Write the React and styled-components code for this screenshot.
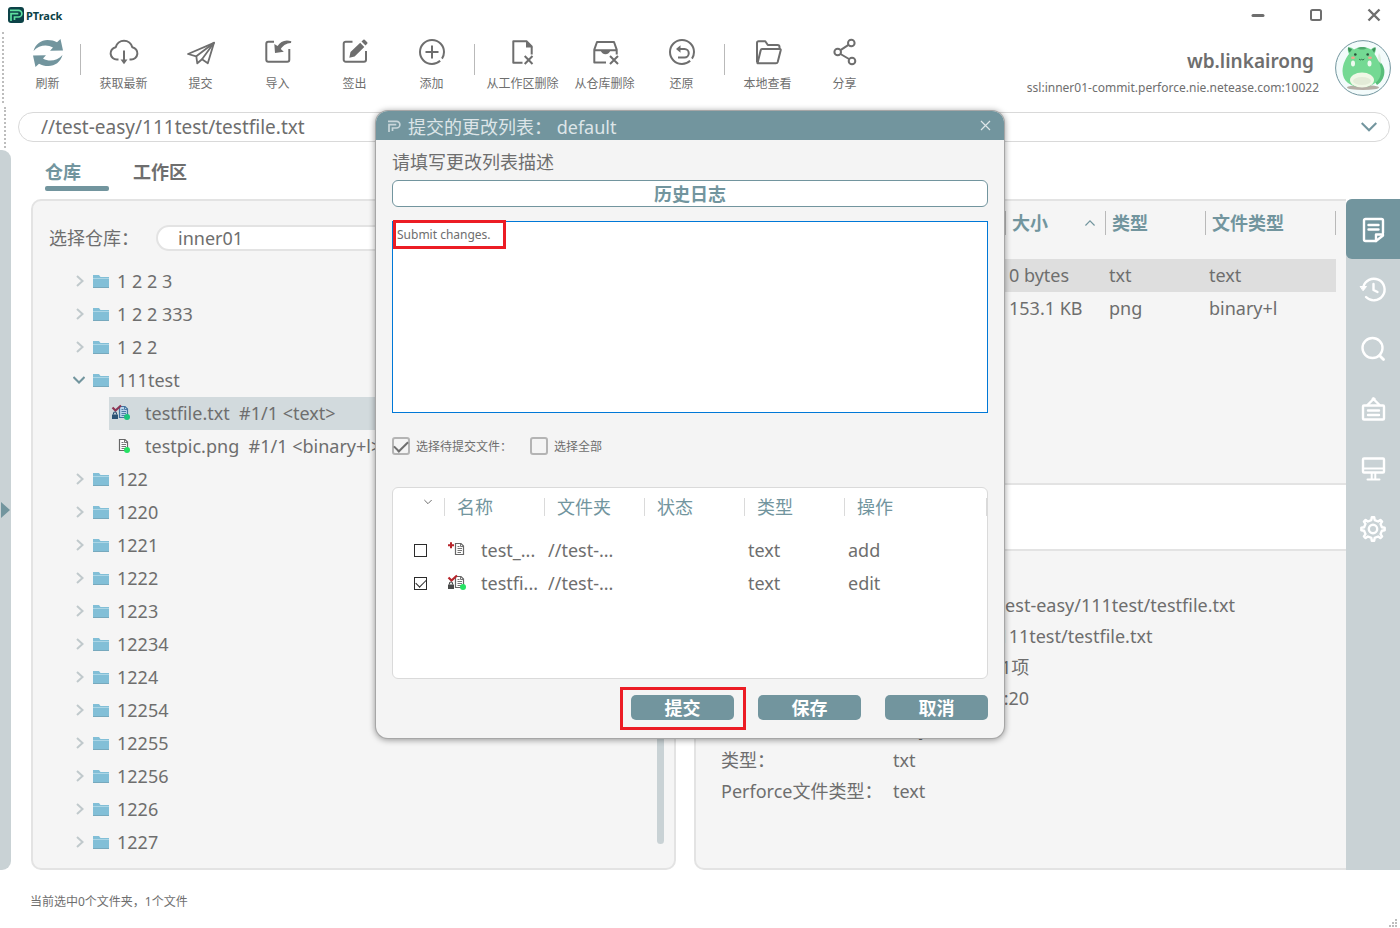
import React from 'react'
import styled, { createGlobalStyle, css } from 'styled-components'

const GlobalStyle = createGlobalStyle`
  * {
    box-sizing: border-box;
  }
  body {
    margin: 0;
    background: #fff;
    color: #6e6e6e;
    font-family: "Noto Sans", "Noto Sans CJK SC", sans-serif;
    font-size: 18px;
  }
  button, input, textarea, select {
    font: inherit;
    color: inherit;
  }
  button {
    padding: 0;
    border: none;
    background: none;
    cursor: pointer;
  }
  ul, dl, dd {
    margin: 0;
    padding: 0;
    list-style: none;
  }
  svg {
    display: block;
    flex: none;
  }
`

const Page = styled.div`
  position: relative;
  min-height: 100vh;
  display: flex;
  flex-direction: column;
`

/* ---------- title bar ---------- */

const TitleBar = styled.header`
  display: flex;
  align-items: center;
  justify-content: space-between;
  height: 30px;
  padding: 0 13px 0 8px;
`

const Brand = styled.div`
  display: flex;
  align-items: center;
  gap: 2px;
  font-size: 11px;
  font-weight: 700;
  color: #0c4247;
`

const WindowButtons = styled.div`
  display: flex;
  gap: 32px;
`

const WindowButton = styled.button`
  width: 26px;
  height: 26px;
  display: flex;
  align-items: center;
  justify-content: center;
`

/* ---------- toolbar ---------- */

const ToolRow = styled.div`
  display: flex;
  height: 75px;
  padding: 0 9px 0 2px;
`

const Grip = styled.div`
  width: 0;
  border-left: 2px dotted #bdbdbd;
  margin: 2px 0;
`

const Tools = styled.nav`
  display: flex;
  flex: 1;
  padding-left: 15px;
`

const ToolButton = styled.button`
  width: ${(p) => p.$width || 77}px;
  display: flex;
  flex-direction: column;
  align-items: center;
  gap: 8px;
  padding-top: 7px;
  font-size: 12px;
  line-height: 18px;
  white-space: nowrap;
`

const ToolDivider = styled.span`
  width: 1px;
  height: 31px;
  margin: 14px 4px 0;
  background: #b9b9b9;
`

const User = styled.div`
  display: flex;
  gap: 16px;
  padding-top: 9px;
`

const UserText = styled.div`
  text-align: right;
  font-size: 12px;
  line-height: 18px;
  padding-top: 8px;
`

const UserName = styled.div`
  font-size: 19px;
  font-weight: 600;
  line-height: 28px;
  margin-bottom: 4px;
  padding-right: 5px;
`

/* ---------- path ---------- */

const PathRow = styled.div`
  display: flex;
  gap: 12px;
  height: 45px;
  padding: 0 10px 0 4px;
`

const PathBox = styled.div`
  flex: 1;
  display: flex;
  align-items: center;
  height: 30px;
  margin-top: 7px;
  padding: 0 12px 0 22px;
  border: 1px solid #d9d9d9;
  border-radius: 15px;
`

const PathInput = styled.input`
  flex: 1;
  min-width: 0;
  padding: 0;
  border: none;
  outline: none;
  font-size: 19px;
  background: transparent;
`

/* ---------- main ---------- */

const Main = styled.main`
  flex: 1;
  display: flex;
`

const CollapseStrip = styled.button`
  width: 11px;
  display: flex;
  align-items: center;
  padding-left: 1px;
  background: #c9d2d5;
  border-radius: 0 9px 9px 0;
`

const Content = styled.div`
  flex: 1;
  display: flex;
  flex-direction: column;
  padding-left: 20px;
`

const Tabs = styled.div`
  display: flex;
  gap: 24px;
  height: 49px;
  padding: 0 14px 8px;
`

const Tab = styled.button`
  position: relative;
  min-width: 64px;
  text-align: left;
  font-weight: 700;
  color: ${(p) => (p.$active ? '#72959e' : '#6e6e6e')};

  ${(p) =>
    p.$active &&
    css`
      &::after {
        content: '';
        position: absolute;
        left: 0;
        right: 0;
        bottom: 0;
        height: 5px;
        border-radius: 2px;
        background: #72959e;
      }
    `}
`

const Workspace = styled.div`
  flex: 1;
  display: flex;
`

const RepoPanel = styled.section`
  flex: 1 1 645px;
  min-width: 0;
  display: flex;
  flex-direction: column;
  margin-right: 18px;
  border: 2px solid #e3e3e3;
  border-radius: 10px;
  background: #f5f5f5;
`

const RepoRow = styled.div`
  display: flex;
  align-items: center;
  padding: 24px 14px 14px 16px;
`

const RepoLabel = styled.label`
  width: 107px;
  line-height: 26px;
`

const RepoSelect = styled.select`
  flex: 1;
  appearance: none;
  height: 26px;
  padding: 0 20px;
  border: 2px solid #e3e3e3;
  border-radius: 13px;
  background: #fff;
  line-height: 20px;
`

const TreeArea = styled.div`
  flex: 1;
  display: flex;
`

const Tree = styled.ul`
  flex: 1;
  min-width: 0;
`

const TreeRow = styled.div`
  display: flex;
  align-items: center;
  gap: 8px;
  height: 33px;
  padding: 0 0 2px 40px;
  white-space: pre;
`

const FileRow = styled.div`
  display: flex;
  align-items: center;
  gap: 14px;
  height: 33px;
  margin-left: 76px;
  padding: 0 0 2px 2px;
  white-space: pre;
  background: ${(p) => (p.$selected ? '#d2dadd' : 'transparent')};
`

const ScrollThumb = styled.div`
  align-self: flex-end;
  width: 7px;
  height: 400px;
  margin: 0 10px 24px 8px;
  border-radius: 4px;
  background: #c9d2d5;
`

const InfoPanel = styled.section`
  flex: 1 1 652px;
  min-width: 0;
  display: flex;
  flex-direction: column;
  border: 2px solid #e3e3e3;
  border-right: none;
  border-radius: 10px 0 0 10px;
  background: #f5f5f5;
  overflow: hidden;
`

const FileArea = styled.div`
  flex: 1 1 284px;
  padding: 0 10px 0 8px;
  border-bottom: 2px solid #e3e3e3;
`

const FileTable = styled.table`
  width: 100%;
  table-layout: fixed;
  border-collapse: collapse;

  th {
    width: 100px;
    height: 58px;
    padding: 10px 0 0;
    vertical-align: top;
    text-align: left;
    color: #72959e;
  }
  th:first-child {
    width: auto;
  }
  th:last-child {
    width: 131px;
  }
  th:last-child > span {
    border-right: 1px solid #b9b9b9;
  }
  td {
    height: 33px;
    padding: 0 0 2px 4px;
    white-space: nowrap;
  }
`

const HeadCell = styled.span`
  display: flex;
  align-items: center;
  justify-content: space-between;
  height: 24px;
  line-height: 26px;
  padding: 0 10px 0 6px;
  border-left: 1px solid #b9b9b9;
`

const FileTableRow = styled.tr`
  background: ${(p) => (p.$selected ? '#dedede' : 'transparent')};
`

const Band = styled.div`
  flex: none;
  height: 66px;
  background: #fff;
  border-bottom: 2px solid #e3e3e3;
`

const Details = styled.dl`
  flex: 1 1 317px;
  display: grid;
  grid-template-columns: 172px 1fr;
  grid-auto-rows: 31px;
  align-content: start;
  line-height: 31px;
  padding: 39px 0 0 25px;
  white-space: nowrap;
`

const Sidebar = styled.nav`
  flex: none;
  width: 54px;
  background: #c9d2d5;
  border-radius: 6px 0 0 0;
`

const SideButton = styled.button`
  width: 54px;
  height: 60px;
  display: flex;
  align-items: center;
  justify-content: center;
  border-radius: 6px 0 0 6px;
  background: ${(p) => (p.$active ? '#72959e' : 'transparent')};
`

const StatusBar = styled.footer`
  display: flex;
  align-items: center;
  justify-content: space-between;
  height: 58px;
  padding: 3px 2px 0 30px;
  font-size: 12px;

  svg {
    align-self: flex-end;
  }
`

/* ---------- dialog ---------- */

const Overlay = styled.div`
  position: absolute;
  inset: 0;
  display: flex;
  align-items: flex-start;
  justify-content: center;
  padding: 111px 20px 0 0;
`

const Dialog = styled.div`
  width: 628px;
  border-radius: 12px;
  background: #f4f4f4;
  box-shadow: 0 0 0 1px #a6a6a6, 0 1px 6px 1px rgba(0, 0, 0, 0.4);
`

const DialogTitle = styled.div`
  display: flex;
  align-items: center;
  height: 29px;
  padding: 0 8px 0 10px;
  border-radius: 12px 12px 0 0;
  background: #72959e;
  color: #dde5e8;

  h2 {
    flex: 1;
    margin: 0 0 0 6px;
    font-size: 18px;
    font-weight: 400;
    line-height: 29px;
    padding-top: 3px;
  }
`

const DialogClose = styled.button`
  width: 22px;
  height: 22px;
  display: flex;
  align-items: center;
  justify-content: center;
`

const DialogBody = styled.form`
  display: flex;
  flex-direction: column;
  padding: 9px 16px 18px;
`

const DialogLabel = styled.label`
  line-height: 26px;
  margin-bottom: 5px;
`

const HistoryButton = styled.button`
  height: 27px;
  border: 1px solid #72959e;
  border-radius: 6px;
  background: #fff;
  color: #72959e;
  font-weight: 700;
  line-height: 24px;
`

const Marked = styled.div`
  position: relative;
  display: flex;
`

const Mark = styled.span`
  position: absolute;
  top: ${(p) => p.$top}px;
  left: ${(p) => p.$left}px;
  width: ${(p) => p.$width}px;
  height: ${(p) => p.$height}px;
  border: 3px solid #ec1c24;
  pointer-events: none;
`

const Description = styled.textarea`
  flex: 1;
  height: 192px;
  margin-top: 14px;
  padding: 4px;
  border: 1px solid #0078d7;
  outline: none;
  resize: none;
  background: #fff;
  font-size: 12px;
  line-height: 18px;
`

const Options = styled.div`
  display: flex;
  gap: 18px;
  margin: 24px 0 32px;
  height: 18px;
  font-size: 12px;
  line-height: 20px;

  label {
    display: flex;
    gap: 6px;
  }
`

const Check = styled.input`
  appearance: none;
  display: flex;
  align-items: center;
  justify-content: center;
  flex: none;
  width: ${(p) => p.$size}px;
  height: ${(p) => p.$size}px;
  margin: 0;
  border: ${(p) => (p.$size > 13 ? '2px solid #b4b4b4' : '1px solid #2b2b2b')};
  border-radius: ${(p) => (p.$size > 13 ? 3 : 0)}px;

  &:checked::after {
    content: '';
    width: ${(p) => (p.$size > 13 ? 12 : 9)}px;
    height: ${(p) => (p.$size > 13 ? 6 : 5)}px;
    margin-bottom: 3px;
    border: solid ${(p) => (p.$size > 13 ? '#6e6e6e' : '#2b2b2b')};
    border-width: 0 0 ${(p) => (p.$size > 13 ? '2px 2px' : '1px 1px')};
    transform: rotate(-45deg);
  }
`

const ChangeBox = styled.div`
  height: 192px;
  border: 1px solid #dadada;
  border-radius: 6px;
  background: #fff;
`

const ChangeTable = styled.table`
  width: 100%;
  table-layout: fixed;
  border-collapse: collapse;

  th {
    width: 100px;
    height: 46px;
    padding: 10px 0 0;
    vertical-align: top;
    text-align: left;
    font-weight: 400;
    color: #72959e;
  }
  th:first-child {
    width: 51px;
  }
  th:last-child {
    width: auto;
  }
  th:last-child > span {
    border-right: 1px solid #dadada;
  }
  td {
    height: 33px;
    padding: 0 0 2px 4px;
    white-space: nowrap;
  }
  td:first-child {
    padding: 0 0 0 21px;
  }
`

const ChangeHead = styled.span`
  display: block;
  height: 18px;
  line-height: 18px;
  padding-left: 12px;
  border-left: 1px solid #dadada;
`

const SortMark = styled.span`
  display: block;
  padding-left: 31px;
`

const NameCell = styled.div`
  display: flex;
  align-items: center;
  gap: 14px;
  margin-left: -1px;
`

const Actions = styled.div`
  display: flex;
  justify-content: flex-end;
  gap: 24px;
  margin-top: 16px;
`

const ActionButton = styled.button`
  width: 103px;
  height: 25px;
  border-radius: 5px;
  background: #72959e;
  color: #fff;
  font-weight: 700;
  line-height: 24px;
`

/* ---------- icons ---------- */

const ToolIcon = ({ children }) => (
  <svg width="30" height="30" viewBox="0 0 30 30" fill="none" stroke="#6e6e6e" strokeWidth="2" strokeLinejoin="round">
    {children}
  </svg>
)

const swoosh = 'M0.5 14C2.5 7 8 3 14.5 3C18.500 3 21 3.800 24 5.300L27.500 2L30 13.500L17 13.800L20 10.500C14 7 6 8 0.500 14Z'

const icons = {
  refresh: (
    <g fill="#72959e" stroke="none">
      <path d={swoosh} />
      <path d={swoosh} transform="rotate(180 15 16)" />
    </g>
  ),
  latest: (
    <>
      <path d="M9.500 22.500H8A6.200 6.200 0 0 1 6.700 10.200 8.600 8.600 0 0 1 23.300 10.200 6.200 6.200 0 0 1 22 22.500H20.500" />
      <path d="M15 13.500V23" />
      <path d="M11.500 22.500H18.500L15 27.300Z" fill="#6e6e6e" stroke="none" />
    </>
  ),
  submit: (
    <>
      <path d="M2 17L28 5.800L21.800 26.300L16 22.300L11.300 26.300L10.300 19.300Z" strokeWidth="1.800" />
      <path d="M10.300 19.300L28 5.800L16 22.300" strokeWidth="1.800" />
    </>
  ),
  import: (
    <>
      <path d="M11 4.700H5.300A2 2 0 0 0 3.300 6.700V22.700A2 2 0 0 0 5.300 24.700H24.300A2 2 0 0 0 26.300 22.700V12" />
      <path d="M28.300 4.200C22 2 17.500 4.600 14.600 9L11.300 7L12 16L20.800 14.800L17.800 12C20 8.500 23 6.200 28 5.900Z" fill="#6e6e6e" stroke="none" />
    </>
  ),
  checkout: (
    <>
      <path d="M12.500 4.700H5.700A2 2 0 0 0 3.700 6.700V22.700A2 2 0 0 0 5.700 24.700H24A2 2 0 0 0 26 22.700V14" />
      <path d="M9.300 20.700L10.500 15L20.200 5.800L24.300 9.900L14.600 19.400Z M21.500 4.600L23.300 2.800Q24 2.200 24.700 2.800L27.200 5.300Q27.900 6 27.200 6.700L25.500 8.600Z" fill="#6e6e6e" stroke="none" />
    </>
  ),
  add: (
    <>
      <circle cx="15" cy="15" r="12" strokeDasharray="7 2.800 65.600" />
      <path d="M15 8.500V21.500M8.500 15H21.500" />
    </>
  ),
  removeWork: (
    <>
      <path d="M14.500 25.700H5.300V4.300H18.500L23.700 9.500V17.500" />
      <path d="M18 3.500V10.500H24.700Z" fill="#6e6e6e" stroke="none" />
      <path d="M16.700 19L24.500 27M24.500 19L16.700 27" />
    </>
  ),
  removeRepo: (
    <>
      <path d="M16 25.500H4.300V12.700L7 5H24L26.700 12.700V17.500M4 13.300H27" />
      <path d="M10.500 13.300H20.500Q19 17.300 15.500 17.300Q12 17.300 10.500 13.300Z" fill="#6e6e6e" stroke="none" />
      <path d="M20 19L28 27M28 19L20 27" />
    </>
  ),
  revert: (
    <>
      <circle cx="15" cy="15" r="12" strokeDasharray="7 2.800 65.600" />
      <path d="M12 12H17.500A4.200 4.200 0 0 1 17.500 20.500H11" />
      <path d="M9 12L13.500 8.300V15.700Z" fill="#6e6e6e" stroke="none" />
    </>
  ),
  local: (
    <>
      <path d="M4 25.500V5.800A1.500 1.500 0 0 1 5.500 4.300H12.300L14.800 8H24.500A2 2 0 0 1 26.500 10V12" />
      <path d="M9 12H26.700Q28 12 27.700 13.300L24.700 25Q24.300 26.300 23 26.300H4.500L7.700 13.200Q8 12 9 12Z" />
    </>
  ),
  share: (
    <>
      <circle cx="21.300" cy="6" r="3.300" />
      <circle cx="7.700" cy="15" r="3.300" />
      <circle cx="22" cy="24" r="3.300" />
      <path d="M10.500 13.200L18.500 7.900M10.500 17L19 22" />
    </>
  ),
}

const SideIcon = ({ children }) => (
  <svg width="28" height="28" viewBox="0 0 28 28" fill="none" stroke="#fff" strokeWidth="2.400" strokeLinejoin="round" strokeLinecap="round">
    {children}
  </svg>
)

const sideIcons = {
  '详情': (
    <>
      <path d="M24 18V5.500A1.500 1.500 0 0 0 22.500 4H6.500A1.500 1.500 0 0 0 5 5.500V24.500A1.500 1.500 0 0 0 6.500 26H17L24 20.500" />
      <path d="M9.500 10H19.500M9.500 14.500H19.500M17 26V19.500H24" />
    </>
  ),
  '历史': (
    <>
      <path d="M4.300 12A10.800 10.800 0 1 1 7 22" />
      <path d="M1.500 11.500H7.500L4.300 15.500Z" fill="#fff" strokeWidth="1" />
      <path d="M14.500 9V15L18.500 17" />
    </>
  ),
  '搜索': (
    <>
      <circle cx="13.500" cy="13" r="10" />
      <path d="M20.500 20.500L24.500 24.500" strokeWidth="2.800" />
    </>
  ),
  '公告': (
    <>
      <rect x="4" y="10.500" width="21" height="14" rx="1" />
      <path d="M9 15.500H20M9 20H20M8.500 10L14.500 4L20.500 10" />
      <circle cx="14.500" cy="4" r="1.500" fill="#fff" strokeWidth="1" />
    </>
  ),
  '桌面': (
    <>
      <rect x="4" y="3.500" width="21" height="14" rx="1" />
      <path d="M4 13.500H25M12.700 18V24M16.300 18V24M8.500 24.500H20.500" strokeWidth="2" />
    </>
  ),
  '设置': (
    <>
      <circle cx="14" cy="14" r="4.200" />
      <path d="M12.300 5.100L12.800 2.300H15.200L15.700 5.100L19.100 6.500L21.400 4.900L23.100 6.600L21.500 8.900L22.900 12.300L25.700 12.800V15.200L22.900 15.700L21.500 19.100L23.100 21.400L21.400 23.100L19.100 21.500L15.700 22.900L15.200 25.700H12.800L12.300 22.900L8.900 21.500L6.600 23.100L4.900 21.400L6.500 19.100L5.100 15.700L2.300 15.200V12.800L5.100 12.300L6.500 8.900L4.900 6.600L6.600 4.900L8.900 6.500Z" />
    </>
  ),
}

const Chevron = ({ dir, size = 12, width = 2, color = '#c0c9cc' }) => {
  const d = {
    right: 'M4 1L9.500 6L4 11',
    down: 'M0.500 3L6 8.500L11.500 3',
    up: 'M0.500 9L6 3.500L11.500 9',
  }
  return (
    <svg width={size} height={size} viewBox="0 0 12 12" fill="none" stroke={color} strokeWidth={width}>
      <path d={d[dir]} />
    </svg>
  )
}

const Folder = () => (
  <svg width="16" height="14" viewBox="0 0 16 14">
    <path d="M0 1H6L7.500 3H16V14H0Z" fill="#82bfd7" />
    <path d="M0 4.500H16" stroke="#acd6e6" />
    <path d="M0 13.500H16" stroke="#77a9bd" />
  </svg>
)

const FileIcon = ({ state, dot, tinted }) => {
  const line = tinted ? '#41739f' : '#666'
  const red = tinted ? '#8d3554' : '#b7252b'
  return (
    <svg width="20" height="18" viewBox="0 0 20 18" fill="none">
      <path d="M8.500 2.500H14L16.500 5V13.500H8.500Z" fill={tinted ? '#b9d4ea' : '#fff'} stroke={line} strokeWidth="1.200" />
      <path d="M13.500 2.500V5.500H16.500M10.500 5.500H12.500M10.500 7.500H15M10.500 9.500H15M10.500 11.500H14" stroke={line} strokeWidth="0.900" />
      {state === 'add' && <path d="M4 1.300V7.300M1 4.300H7" stroke={red} strokeWidth="2" />}
      {state === 'edit' && (
        <>
          <path d="M1.500 3.500L4.500 6.500L10 1.500" stroke={red} strokeWidth="2.200" />
          <path d="M1 10.500H7V15H1Z" fill={tinted ? '#2c5374' : '#4a4a4a'} />
          <path d="M2.500 10.500V9.500A1.500 1.500 0 0 1 5.500 9.500V10.500" stroke={tinted ? '#2c5374' : '#4a4a4a'} strokeWidth="1.200" />
        </>
      )}
      {dot && <circle cx="16" cy="13" r="3" fill={tinted ? '#1bc47d' : '#25e263'} />}
    </svg>
  )
}

const LogoMark = ({ color, back }) => (
  <svg width="16" height="16" viewBox="0 0 16 16" fill="none">
    {back && <rect width="16" height="16" rx="3" fill={back} />}
    <path d="M2 3.300H10.500A3.300 3.300 0 0 1 10.500 10H6.500V13" stroke={color} strokeWidth="1.700" />
    <path d="M3 14V6.700H10.300" stroke={color} strokeWidth="1.700" />
  </svg>
)

const Avatar = () => (
  <svg width="56" height="58" viewBox="0 0 56 58">
    <circle cx="28" cy="29" r="27.400" fill="#f3fbfb" stroke="#72959e" />
    <ellipse cx="28" cy="48.500" rx="16" ry="2.500" fill="#b5aea6" />
    <path d="M42 46C47 43 50 37 49.300 31C48.500 26 46 24 44 21L38 40Z" fill="#57bd79" />
    <path d="M44 14C42.500 17 43 22 45.500 25C46.500 21 46 17 44 14Z" fill="#dfeee0" />
    <path d="M13 8.500C15 8 17 9 19 10.500C24 7.500 31 7.500 36 10.500C38 9 39 8 40.500 8.500C41 11 40.500 13 39.500 15C42 19 46 25 46 32C46 42 38 48 27 48C15 48 7.500 42 7.500 32C7.500 25 11 19 14 15C13 13 12.500 11 13 8.500Z" fill="#74d993" />
    <path d="M13 8.500C14.500 8.500 16 9.500 17 10.500L14.800 13.500C13.300 12 12.800 10 13 8.500ZM40.500 8.500C39.500 8.500 38 9.500 37 10.500L39 13.500C40.300 12 40.700 10 40.500 8.500Z" fill="#3f8f5a" />
    <path d="M22 9C25 7.500 30 7.500 32 9C29 11 25 11 22 9Z" fill="#4fa96d" />
    <ellipse cx="27" cy="41" rx="12" ry="7.500" fill="#f0f8e6" />
    <ellipse cx="27" cy="42" rx="9" ry="4" fill="#e3ecd8" />
    <circle cx="20.300" cy="15.500" r="1.300" fill="#27543a" />
    <circle cx="32.700" cy="15.500" r="1.300" fill="#27543a" />
    <path d="M24 20Q25.300 21.800 26.500 20.300Q28 21.800 29.300 20" fill="none" stroke="#2f6d48" strokeWidth="0.900" />
    <ellipse cx="18" cy="18.700" rx="2" ry="1.300" fill="#f1a48d" />
    <ellipse cx="35" cy="18.700" rx="2" ry="1.300" fill="#f1a48d" />
    <ellipse cx="18" cy="24.500" rx="2" ry="3" fill="#eefaf0" />
    <ellipse cx="34.500" cy="24.500" rx="2" ry="3" fill="#eefaf0" />
  </svg>
)

/* ---------- data ---------- */

const tools = [
  { icon: 'refresh', label: '刷新', width: 57 },
  { divider: true },
  { icon: 'latest', label: '获取最新' },
  { icon: 'submit', label: '提交' },
  { icon: 'import', label: '导入' },
  { icon: 'checkout', label: '签出' },
  { icon: 'add', label: '添加' },
  { divider: true },
  { icon: 'removeWork', label: '从工作区删除', width: 87 },
  { icon: 'removeRepo', label: '从仓库删除' },
  { icon: 'revert', label: '还原' },
  { divider: true },
  { icon: 'local', label: '本地查看' },
  { icon: 'share', label: '分享' },
]

const folders = [
  { name: '1 2 2 3' },
  { name: '1 2 2 333' },
  { name: '1 2 2' },
  {
    name: '111test',
    files: [
      { text: 'testfile.txt  #1/1 <text>', state: 'edit', selected: true },
      { text: 'testpic.png  #1/1 <binary+l>' },
    ],
  },
  { name: '122' },
  { name: '1220' },
  { name: '1221' },
  { name: '1222' },
  { name: '1223' },
  { name: '12234' },
  { name: '1224' },
  { name: '12254' },
  { name: '12255' },
  { name: '12256' },
  { name: '1226' },
  { name: '1227' },
]

const files = [
  { name: 'testfile.txt', size: '0 bytes', type: 'txt', fileType: 'text', selected: true },
  { name: 'testpic.png', size: '153.1 KB', type: 'png', fileType: 'binary+l' },
]

const details = [
  ['仓库路径：', 'netease01://test-easy/111test/testfile.txt'],
  ['本地路径：', 'D:/p4w/test/111test/testfile.txt'],
  ['选中：', '共选中的文件1项'],
  ['修改时间：', '2023/5/10 16:20'],
  ['大小：', '0 bytes'],
  ['类型：', 'txt'],
  ['Perforce文件类型：', 'text'],
]

const changes = [
  { name: 'test_...', folder: '//test-...', type: 'text', action: 'add', checked: false },
  { name: 'testfi...', folder: '//test-...', type: 'text', action: 'edit', checked: true },
]

/* ---------- parts ---------- */

const SubmitDialog = () => (
  <Overlay>
    <Dialog role="dialog" aria-labelledby="dialog-title">
      <DialogTitle>
        <LogoMark color="#c9d6da" />
        <h2 id="dialog-title">提交的更改列表： default</h2>
        <DialogClose aria-label="关闭">
          <svg width="11" height="11" viewBox="0 0 11 11" stroke="#dde5e8" strokeWidth="1.200">
            <path d="M1 1L10 10M10 1L1 10" />
          </svg>
        </DialogClose>
      </DialogTitle>
      <DialogBody onSubmit={(e) => e.preventDefault()}>
        <DialogLabel htmlFor="description">请填写更改列表描述</DialogLabel>
        <HistoryButton type="button">历史日志</HistoryButton>
        <Marked>
          <Description id="description" defaultValue="Submit changes." spellCheck="false" />
          <Mark $top={13} $left={1} $width={113} $height={29} />
        </Marked>
        <Options>
          <label>
            <Check type="checkbox" $size={18} defaultChecked />
            选择待提交文件：
          </label>
          <label>
            <Check type="checkbox" $size={18} />
            选择全部
          </label>
        </Options>
        <ChangeBox>
          <ChangeTable>
            <thead>
              <tr>
                <th>
                  <SortMark>
                    <Chevron dir="down" size={8} width={1.5} color="#6e6e6e" />
                  </SortMark>
                </th>
                <th><ChangeHead>名称</ChangeHead></th>
                <th><ChangeHead>文件夹</ChangeHead></th>
                <th><ChangeHead>状态</ChangeHead></th>
                <th><ChangeHead>类型</ChangeHead></th>
                <th><ChangeHead>操作</ChangeHead></th>
              </tr>
            </thead>
            <tbody>
              {changes.map((c) => (
                <tr key={c.name}>
                  <td>
                    <Check type="checkbox" $size={13} defaultChecked={c.checked} aria-label={c.name} />
                  </td>
                  <td>
                    <NameCell>
                      <FileIcon state={c.action} dot={c.checked} />
                      {c.name}
                    </NameCell>
                  </td>
                  <td>{c.folder}</td>
                  <td></td>
                  <td>{c.type}</td>
                  <td>{c.action}</td>
                </tr>
              ))}
            </tbody>
          </ChangeTable>
        </ChangeBox>
        <Actions>
          <Marked>
            <ActionButton type="submit">提交</ActionButton>
            <Mark $top={-8} $left={-11} $width={126} $height={43} />
          </Marked>
          <ActionButton type="button">保存</ActionButton>
          <ActionButton type="button">取消</ActionButton>
        </Actions>
      </DialogBody>
    </Dialog>
  </Overlay>
)

const App = () => {
  return (
    <Page>
      <GlobalStyle />

      <TitleBar>
        <Brand>
          <LogoMark color="#5fe0a0" back="#0c4247" />
          PTrack
        </Brand>
        <WindowButtons>
          <WindowButton aria-label="最小化">
            <svg width="14" height="14" viewBox="0 0 14 14" stroke="#6e6e6e" strokeWidth="3" strokeLinecap="round">
              <path d="M2 7.500H12" />
            </svg>
          </WindowButton>
          <WindowButton aria-label="最大化">
            <svg width="14" height="14" viewBox="0 0 14 14" fill="none" stroke="#6e6e6e" strokeWidth="2">
              <rect x="2" y="2" width="10" height="10" rx="1.500" />
            </svg>
          </WindowButton>
          <WindowButton aria-label="关闭窗口">
            <svg width="14" height="14" viewBox="0 0 14 14" stroke="#6e6e6e" strokeWidth="2.400">
              <path d="M1.500 1.500L12.500 12.500M12.500 1.500L1.500 12.500" />
            </svg>
          </WindowButton>
        </WindowButtons>
      </TitleBar>

      <ToolRow>
        <Grip />
        <Tools>
          {tools.map((t, i) =>
            t.divider ? (
              <ToolDivider key={i} />
            ) : (
              <ToolButton key={i} $width={t.width}>
                <ToolIcon>{icons[t.icon]}</ToolIcon>
                {t.label}
              </ToolButton>
            )
          )}
        </Tools>
        <User>
          <UserText>
            <UserName>wb.linkairong</UserName>
            ssl:inner01-commit.perforce.nie.netease.com:10022
          </UserText>
          <Avatar />
        </User>
      </ToolRow>

      <PathRow>
        <Grip />
        <PathBox>
          <PathInput aria-label="路径" defaultValue="//test-easy/111test/testfile.txt" />
          <button aria-label="展开路径">
            <Chevron dir="down" size={16} width={1.6} color="#72959e" />
          </button>
        </PathBox>
      </PathRow>

      <Main>
        <CollapseStrip aria-label="展开侧栏">
          <svg width="9" height="18" viewBox="0 0 9 18" fill="#72959e">
            <path d="M0 1L9 9L0 17Z" />
          </svg>
        </CollapseStrip>
        <Content>
          <Tabs>
            <Tab $active>仓库</Tab>
            <Tab>工作区</Tab>
          </Tabs>
          <Workspace>
            <RepoPanel>
              <RepoRow>
                <RepoLabel htmlFor="repo">选择仓库：</RepoLabel>
                <RepoSelect id="repo">
                  <option>inner01</option>
                </RepoSelect>
              </RepoRow>
              <TreeArea>
                <Tree>
                  {folders.map((f) => (
                    <li key={f.name}>
                      <TreeRow>
                        {f.files ? (
                          <Chevron dir="down" color="#72959e" />
                        ) : (
                          <Chevron dir="right" />
                        )}
                        <Folder />
                        {f.name}
                      </TreeRow>
                      {f.files && (
                        <ul>
                          {f.files.map((file) => (
                            <li key={file.text}>
                              <FileRow $selected={file.selected}>
                                <FileIcon state={file.state} tinted={file.selected} dot />
                                {file.text}
                              </FileRow>
                            </li>
                          ))}
                        </ul>
                      )}
                    </li>
                  ))}
                </Tree>
                <ScrollThumb />
              </TreeArea>
            </RepoPanel>

            <InfoPanel>
              <FileArea>
                <FileTable>
                  <thead>
                    <tr>
                      <th><HeadCell>名称</HeadCell></th>
                      <th>
                        <HeadCell>
                          大小
                          <Chevron dir="up" size={10} width={1.5} color="#72959e" />
                        </HeadCell>
                      </th>
                      <th><HeadCell>类型</HeadCell></th>
                      <th><HeadCell>文件类型</HeadCell></th>
                    </tr>
                  </thead>
                  <tbody>
                    {files.map((f) => (
                      <FileTableRow key={f.name} $selected={f.selected}>
                        <td>{f.name}</td>
                        <td>{f.size}</td>
                        <td>{f.type}</td>
                        <td>{f.fileType}</td>
                      </FileTableRow>
                    ))}
                  </tbody>
                </FileTable>
              </FileArea>
              <Band />
              <Details>
                {details.map(([label, value]) => (
                  <React.Fragment key={label}>
                    <dt>{label}</dt>
                    <dd>{value}</dd>
                  </React.Fragment>
                ))}
              </Details>
            </InfoPanel>

            <Sidebar>
              {Object.keys(sideIcons).map((name, i) => (
                <SideButton key={name} $active={i === 0} aria-label={name}>
                  <SideIcon>{sideIcons[name]}</SideIcon>
                </SideButton>
              ))}
            </Sidebar>
          </Workspace>
        </Content>
      </Main>

      <StatusBar>
        当前选中0个文件夹，1个文件
        <svg width="9" height="9" viewBox="0 0 9 9" fill="#bdbdbd">
          <path d="M6 0h2v2h-2zM3 3h2v2h-2zM6 3h2v2h-2zM0 6h2v2h-2zM3 6h2v2h-2zM6 6h2v2h-2z" />
        </svg>
      </StatusBar>

      <SubmitDialog />
    </Page>
  )
}

export default App
